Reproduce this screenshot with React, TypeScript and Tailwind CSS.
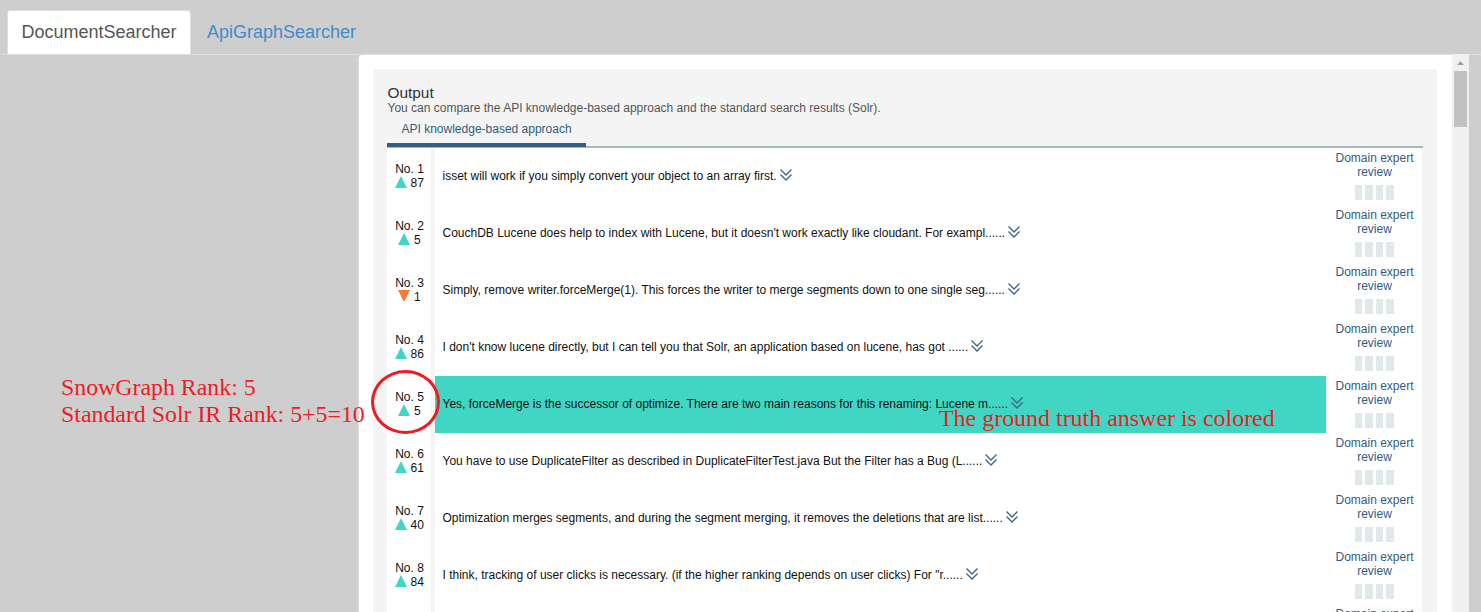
type Row = { rank: number; delta: number; down?: boolean; text: string; match?: boolean };

const rows: Row[] = [
  { rank: 1, delta: 87, text: "isset will work if you simply convert your object to an array first." },
  { rank: 2, delta: 5, text: "CouchDB Lucene does help to index with Lucene, but it doesn't work exactly like cloudant. For exampl......" },
  { rank: 3, delta: 1, down: true, text: "Simply, remove writer.forceMerge(1). This forces the writer to merge segments down to one single seg......" },
  { rank: 4, delta: 86, text: "I don't know lucene directly, but I can tell you that Solr, an application based on lucene, has got ......" },
  { rank: 5, delta: 5, match: true, text: "Yes, forceMerge is the successor of optimize. There are two main reasons for this renaming: Lucene m......" },
  { rank: 6, delta: 61, text: "You have to use DuplicateFilter as described in DuplicateFilterTest.java But the Filter has a Bug (L......" },
  { rank: 7, delta: 40, text: "Optimization merges segments, and during the segment merging, it removes the deletions that are list......" },
  { rank: 8, delta: 84, text: "I think, tracking of user clicks is necessary. (if the higher ranking depends on user clicks) For \"r......" },
];

function Expand() {
  return (
    <svg width="12" height="12" viewBox="0 0 12 12" fill="none" stroke="#3f6687" strokeWidth="1.35" className="ml-[3px] shrink-0 -translate-y-px">
      <path d="M0.5 0.5 6 6 11.5 0.5M0.5 5.5 6 11 11.5 5.5" />
    </svg>
  );
}

function Review() {
  return (
    <div className="flex w-24 shrink-0 flex-col items-center pt-[3px] pl-px text-center leading-[14px] text-[#325c80]">
      <span>Domain expert<br />review</span>
      <div className="mt-1.5 flex h-[15px] gap-[3px]">
        <i className="w-[7px] bg-[#dfe9e9]" />
        <i className="w-2 bg-[#dfe9e9]" />
        <i className="w-[7px] bg-[#dfe9e9]" />
        <i className="w-2 bg-[#dfe9e9]" />
      </div>
    </div>
  );
}

function ResultRow({ row }: { row: Row }) {
  return (
    <div className="flex h-[57px] shrink-0">
      <div className="flex w-11 shrink-0 flex-col items-center pt-3.5 pl-px leading-[14px] text-[#111]">
        <span className="whitespace-nowrap">No. {row.rank}</span>
        <span className="flex items-center gap-[3.5px]">
          <svg width="12" height="12" viewBox="0 0 12 12" className="-translate-y-px">
            <path d={row.down ? "M0 0H12L6 12Z" : "M6 0 12 12H0Z"} fill={row.down ? "#ff7832" : "#41d6c3"} />
          </svg>
          <span>{row.delta}</span>
        </span>
      </div>
      <div className="w-1 shrink-0 bg-[#f4f4f4]" />
      <div className={`flex w-[891px] shrink-0 items-center pb-0.5 pl-[7.5px] whitespace-pre text-[#111] ${row.match ? "bg-[#41d6c3]" : ""}`}>
        {row.text}
        <Expand />
      </div>
      <Review />
    </div>
  );
}

export default function App() {
  return (
    <div className="relative flex h-[612px] w-[1481px] flex-col overflow-hidden bg-[#cecece] font-['Liberation_Sans',Arial,sans-serif] text-xs">
      <nav className="flex h-[55px] shrink-0 items-end border-b border-[#ddd] pl-[7px] text-lg">
        <a className="flex h-11 w-[184px] items-center justify-center rounded-t border border-b-0 border-[#ddd] bg-white pb-0.5 text-[#555]">DocumentSearcher</a>
        <a className="flex h-11 items-center pl-4 text-[#428bca]">ApiGraphSearcher</a>
      </nav>
      <div className="flex min-h-0 grow pl-[358px]">
        <main className="w-[1094px] shrink-0 overflow-hidden rounded-tl border-l border-[#ddd] bg-white px-3.5 pt-3.5">
          <section className="h-[600px] w-[1064px] bg-[#f4f4f4] px-3.5 pt-4">
            <h1 className="pl-[0.5px] text-[15.4px] leading-4 text-[#333]">Output</h1>
            <p className="pl-[0.5px] leading-[14px] text-[#555]">You can compare the API knowledge-based approach and the standard search results (Solr).</p>
            <div className="flex h-[33px] w-[1036px] border-b-2 border-[#aab7b8]">
              <div className="-mb-px h-8 w-[199px] border-b-4 border-[#325c80] pt-[7px] pl-[14.5px] leading-[14px] text-[#325c80]">API knowledge-based approach</div>
            </div>
            <div className="flex w-[1035px] flex-col bg-white">
              {rows.map((row) => <ResultRow key={row.rank} row={row} />)}
              <div className="flex h-[57px] shrink-0">
                <div className="w-11 shrink-0" />
                <div className="w-1 shrink-0 bg-[#f4f4f4]" />
                <div className="w-[891px] shrink-0" />
                <Review />
              </div>
            </div>
          </section>
        </main>
        <div className="-mt-px flex w-[17px] shrink-0 flex-col items-center bg-[#f0f0f0]">
          <svg width="17" height="17" viewBox="0 0 17 17"><path d="M5 11 8.5 7 12 11Z" fill="#a0a0a0" /></svg>
          <div className="h-14 w-[13px] bg-[#c1c1c1]" />
        </div>
      </div>
      <div className="absolute top-[374px] left-[61px] font-['Liberation_Serif','Times_New_Roman',serif] text-[23.85px] leading-[27px] whitespace-nowrap text-[#ed1c24]">
        SnowGraph Rank: 5<br />Standard Solr IR Rank: 5+5=10
      </div>
      <div className="absolute top-[405px] left-[939px] font-['Liberation_Serif','Times_New_Roman',serif] text-[23.95px] leading-[27px] whitespace-nowrap text-[#ed1c24]">
        The ground truth answer is colored
      </div>
      <div className="absolute top-[370px] left-[371px] h-16 w-[69px] rounded-[50%] border-3 border-[#ed1c24]" />
    </div>
  );
}
